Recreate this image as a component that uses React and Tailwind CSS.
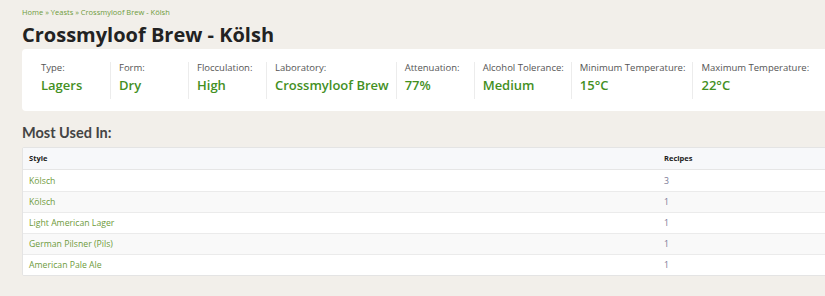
const STATS = [
  { label: 'Type:', value: 'Lagers' },
  { label: 'Form:', value: 'Dry' },
  { label: 'Flocculation:', value: 'High' },
  { label: 'Laboratory:', value: 'Crossmyloof Brew' },
  { label: 'Attenuation:', value: '77%' },
  { label: 'Alcohol Tolerance:', value: 'Medium' },
  { label: 'Minimum Temperature:', value: '15°C' },
  { label: 'Maximum Temperature:', value: '22°C' },
];

const RECIPES = [
  { style: 'Kölsch', count: 3 },
  { style: 'Kölsch', count: 1 },
  { style: 'Light American Lager', count: 1 },
  { style: 'German Pilsner (Pils)', count: 1 },
  { style: 'American Pale Ale', count: 1 },
];

export default function App() {
  return (
    <div className="h-[296px] w-[825px] overflow-hidden bg-[#f2efea] pl-[22px] font-['Open_Sans',sans-serif]">
      <div className="pt-[7px] text-[7.5px] leading-[10px] text-[#6e9b3c]">
        Home » Yeasts » Crossmyloof Brew - Kölsh
      </div>
      <h1 className="mt-[6px] text-[20px] font-bold leading-[24px] text-[#222]">
        Crossmyloof Brew - Kölsh
      </h1>

      <div className="mt-[2px] flex h-[62px] w-[830px] items-center rounded-[4px] bg-white pl-[11px]">
        {STATS.map((s, i) => (
          <div
            key={s.label}
            className={`flex h-[37px] flex-col pl-2 pr-[7px] ${i > 0 ? 'min-w-[78px] border-l border-[#ececec]' : 'min-w-[77px]'}`}
          >
            <div className="text-[9.5px] leading-[12px] text-[#555]">{s.label}</div>
            <div className="mt-[3px] text-[13px] font-semibold leading-[17px] text-[#44901f]">{s.value}</div>
          </div>
        ))}
      </div>

      <h2 className="mt-[13px] font-['Lato',sans-serif] text-[14.5px] font-bold leading-[18px] text-[#444]">
        Most Used In:
      </h2>

      <div className="mt-[5px] w-[830px] overflow-hidden rounded-[2px] border border-[#e4e4e4] bg-white">
        <div className="flex h-[22px] items-center border-b border-[#e6e6e6] bg-[#f7f8fa] text-[7.5px] font-bold text-[#222]">
          <div className="w-[641px] pl-[6px]">Style</div>
          <div>Recipes</div>
        </div>
        {RECIPES.map((r, i) => (
          <div
            key={i}
            className={`flex h-[21px] items-center text-[8.7px] leading-[12px] ${i > 0 ? 'border-t border-[#ebebeb]' : ''} ${i % 2 === 1 ? 'bg-[#f9f9f9]' : 'bg-white'}`}
          >
            <div className="w-[641px] pl-[6px] text-[#6e9b3c]">{r.style}</div>
            <div className="text-[#7a7896]">{r.count}</div>
          </div>
        ))}
      </div>
    </div>
  );
}
